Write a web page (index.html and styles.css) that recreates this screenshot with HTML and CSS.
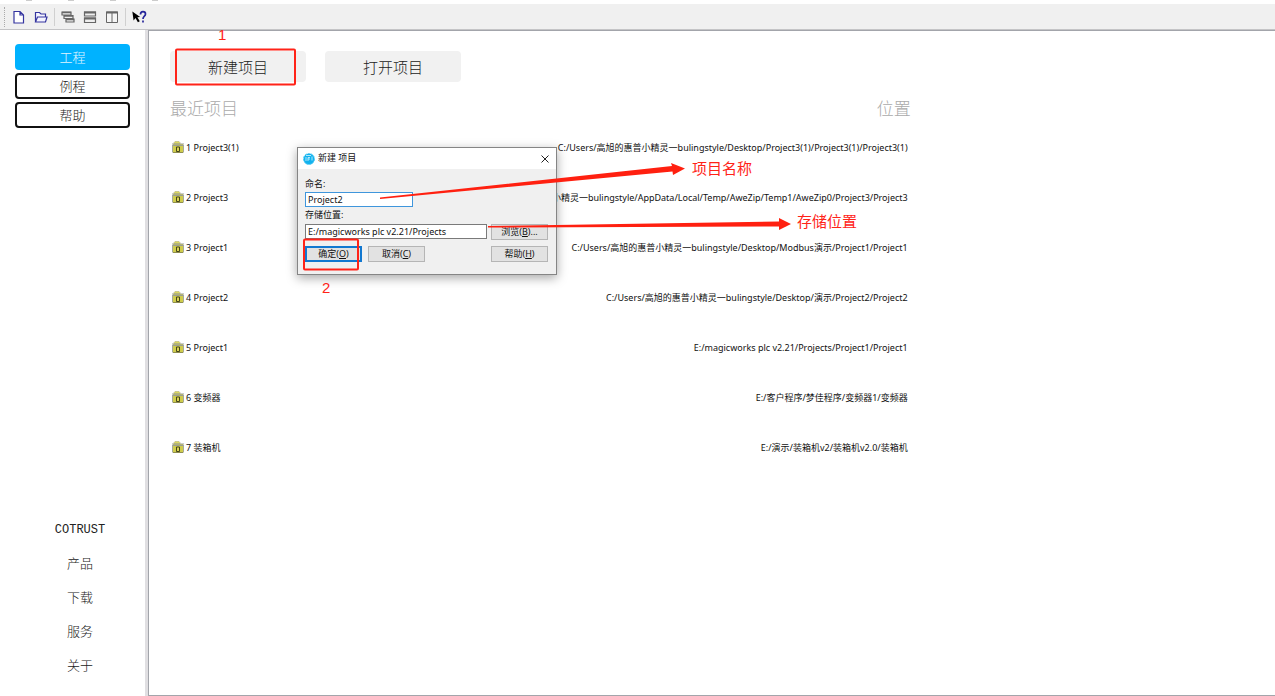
FILE: index.html
```html
<!DOCTYPE html>
<html lang="zh-CN">
<head>
<meta charset="utf-8">
<title>MagicWorks PLC</title>
<link rel="stylesheet" href="styles.css">
</head>
<body>
<svg class="symbols" aria-hidden="true">
  <symbol id="folder" viewBox="0 0 12 12">
    <path d="M1 3h10v8H1z" fill="#cfcc4c"/>
    <path d="M2 3V1.500l1-1h4l1 1V3z" fill="#dcd860" stroke="#b5b27a" stroke-width=".6"/>
    <path d="M0 3h12M0 4.500h12" stroke="#9a9d94"/>
    <path d="M.5 4v7.500M11.500 4v7.500" stroke="#a5a89c"/>
    <path d="M1 11.500h10" stroke="#8f8e50"/>
    <path d="M4.500 6h3v4.500h-3z" fill="#d9d44e" stroke="#45451c"/>
  </symbol>
</svg>
<div class="menu-edge"><i></i><i></i><i></i><i></i></div>
<header class="toolbar">
  <span class="grip"></span>
  <button class="tool" aria-label="新建"><svg viewBox="0 0 16 16"><path d="M3 2.500h6l3.500 3.500v8H3zM9 2.500V6h3.500" fill="#fff" stroke="#3434a0" stroke-width="1.200"/></svg></button>
  <button class="tool" aria-label="打开"><svg viewBox="0 0 16 16"><path d="M2.500 13V3.500h4l1.500 1.500h4.500V8M2.500 13l2-5H14l-1.500 5z" fill="#f4f4ff" stroke="#3434a0" stroke-width="1.200"/></svg></button>
  <span class="sep"></span>
  <button class="tool" aria-label="层叠"><svg viewBox="0 0 16 16"><path d="M2 3h9v3H2zM4 6.500h9v3H4zM6 10h8v3H6z" fill="#eee" stroke="#666" stroke-width="1.200"/><path d="M2 3.500h9M4 7h9M6 10.500h8" stroke="#666" stroke-width="1.400"/></svg></button>
  <button class="tool" aria-label="横向平铺"><svg viewBox="0 0 16 16"><path d="M2.500 3h11v4h-11zM2.500 9h11v4.500h-11z" fill="#eee" stroke="#666" stroke-width="1.200"/><path d="M2 3.500h12M2 9.500h12" stroke="#666" stroke-width="1.800"/></svg></button>
  <button class="tool" aria-label="纵向平铺"><svg viewBox="0 0 16 16"><path d="M2.500 3h11v10.500h-11zM8 3v10.500" fill="#f5f5f5" stroke="#666"/><path d="M2 3.500h12" stroke="#666" stroke-width="2"/></svg></button>
  <span class="sep"></span>
  <button class="tool" aria-label="帮助"><svg viewBox="0 0 16 16"><path d="M2 2v9l2.200-2 1.800 4.500 2-.8-1.800-4.200H9z" transform="rotate(-8 5 7)" fill="#000"/><path d="M9.500 5.500c0-4 5-3.500 5-.5 0 2.200-2.500 2.200-2.500 5M12 11.500V13.500" fill="none" stroke="#26269a" stroke-width="1.700"/></svg></button>
</header>
<div class="workspace">
  <aside class="sidebar">
    <nav class="tabs">
      <button class="tab active">工程</button>
      <button class="tab">例程</button>
      <button class="tab">帮助</button>
    </nav>
    <nav class="links">
      <a class="latin" href="#">COTRUST</a>
      <a href="#">产品</a>
      <a href="#">下载</a>
      <a href="#">服务</a>
      <a href="#">关于</a>
    </nav>
  </aside>
  <main class="page">
    <div class="content">
      <div class="actions">
        <button class="action">新建项目</button>
        <button class="action">打开项目</button>
      </div>
      <div class="heading"><h2>最近项目</h2><h2>位置</h2></div>
      <ul class="recent">
        <li><svg class="folder"><use href="#folder"/></svg><a href="#">1 Project3(1)</a><span class="path">C:/Users/高旭的惠普小精灵一bulingstyle/Desktop/Project3(1)/Project3(1)/Project3(1)</span></li>
        <li><svg class="folder"><use href="#folder"/></svg><a href="#">2 Project3</a><span class="path">C:/Users/高旭的惠普小精灵一bulingstyle/AppData/Local/Temp/AweZip/Temp1/AweZip0/Project3/Project3</span></li>
        <li><svg class="folder"><use href="#folder"/></svg><a href="#">3 Project1</a><span class="path">C:/Users/高旭的惠普小精灵一bulingstyle/Desktop/Modbus演示/Project1/Project1</span></li>
        <li><svg class="folder"><use href="#folder"/></svg><a href="#">4 Project2</a><span class="path">C:/Users/高旭的惠普小精灵一bulingstyle/Desktop/演示/Project2/Project2</span></li>
        <li><svg class="folder"><use href="#folder"/></svg><a href="#">5 Project1</a><span class="path">E:/magicworks plc v2.21/Projects/Project1/Project1</span></li>
        <li><svg class="folder"><use href="#folder"/></svg><a href="#">6 变频器</a><span class="path">E:/客户程序/梦佳程序/变频器1/变频器</span></li>
        <li><svg class="folder"><use href="#folder"/></svg><a href="#">7 装箱机</a><span class="path">E:/演示/装箱机v2/装箱机v2.0/装箱机</span></li>
      </ul>
    </div>
  </main>
</div>
<section class="dialog" role="dialog" aria-labelledby="dialog-title">
  <header class="titlebar">
    <svg class="logo" viewBox="0 0 12 12"><circle cx="6" cy="6" r="5.500" fill="#12b2ee" stroke="#52ccf5" stroke-dasharray="2 1"/><path d="M3 4v4M5 8V4.500h2M5 6h2M9 3.500v4M3 2.500h5" stroke="#d5f4ff" stroke-width=".8" fill="none"/></svg>
    <h1 id="dialog-title">新建 项目</h1>
    <button class="close" aria-label="关闭"><svg viewBox="0 0 8 8"><path d="M.5.5l7 7M7.500.5l-7 7" stroke="#222" fill="none"/></svg></button>
  </header>
  <form class="form">
    <label for="name">命名:</label>
    <input id="name" class="name" value="Project2">
    <label for="place">存储位置:</label>
    <div class="row">
      <input id="place" class="place" value="E:/magicworks plc v2.21/Projects">
      <button type="button" class="btn">浏览(<u>B</u>)...</button>
    </div>
    <div class="row">
      <button type="button" class="btn primary">确定(<u>O</u>)</button>
      <button type="button" class="btn">取消(<u>C</u>)</button>
      <button type="button" class="btn last">帮助(<u>H</u>)</button>
    </div>
  </form>
</section>
<div class="notes">
  <svg class="marks" width="900" height="320" viewBox="0 0 900 320">
    <rect x="176" y="49.500" width="119" height="35" rx="1" fill="none" stroke="#ff2318" stroke-width="2"/>
    <rect x="304" y="239.500" width="54" height="30" rx="1" fill="none" stroke="#ff2318" stroke-width="2"/>
    <path d="M380 197.500L672 166 671 163 685 168.500 673 175 672.500 171.500 380 199z" fill="#ff2010"/>
    <path d="M488 226L779 221.500V218L791 224 779 230V226.500L488 227.500z" fill="#ff2010"/>
  </svg>
  <span class="note one">1</span>
  <span class="note two">2</span>
  <span class="note name-note">项目名称</span>
  <span class="note place-note">存储位置</span>
</div>
</body>
</html>
```
FILE: styles.css
```css
* { box-sizing: border-box; }
body {
  margin: 0;
  height: 100vh;
  display: flex;
  flex-direction: column;
  overflow: hidden;
  background: #fff;
  color: #111;
  font-family: "Noto Sans", "Noto Sans CJK SC", sans-serif;
  font-size: 9px;
}
button, input { font: inherit; color: inherit; margin: 0; padding: 0; }
button { border: 0; background: none; }
a { color: inherit; text-decoration: none; }
h1, h2 { margin: 0; font-weight: 400; }
.symbols { position: absolute; width: 0; height: 0; }

.menu-edge { display: flex; gap: 36px; height: 4px; padding-left: 26px; }
.menu-edge i { width: 6px; height: 1px; background: #ccc; }
.toolbar {
  display: flex;
  align-items: center;
  height: 26px;
  flex: none;
  padding-left: 4px;
  background: #f0f0f0;
  border-bottom: 1px solid #c4c4c6;
}
.grip { width: 1px; height: 20px; margin-right: 5px; border-left: 1px dotted #aaa; }
.tool { width: 18px; height: 18px; margin-right: 4px; }
.tool svg { display: block; width: 16px; height: 16px; margin: 1px; }
.sep { width: 1px; height: 18px; margin-right: 4px; background: #d0d0d0; }

.workspace { flex: 1; display: flex; min-height: 0; }
.sidebar {
  width: 148px;
  flex: none;
  display: flex;
  flex-direction: column;
  justify-content: space-between;
  border-right: 3px solid #e0dfe2;
  font-family: "Liberation Sans", "Noto Sans CJK SC", sans-serif;
  font-size: 13px;
  font-weight: 300;
}
.tabs { display: flex; flex-direction: column; gap: 3px; padding: 14px 15px 0; }
.tab {
  height: 26px;
  padding-bottom: 2px;
  border: 2px solid #111;
  border-radius: 4px;
  background: #fff;
  color: #222;
}
.tab.active { border-color: #00b2ff; background: #00b2ff; color: #e2f5ff; }
.links {
  display: flex;
  flex-direction: column;
  align-items: center;
  gap: 14px;
  padding: 0 0 20px 15px;
  line-height: 20px;
  color: #222;
}
.latin { font-family: "Liberation Mono", monospace; font-size: 12px; }

.page {
  flex: 1;
  border: 1px solid #a3a5ab;
  border-right: 0;
}
.content { width: 68%; padding: 20px 4px 0 21px; }
.actions { display: flex; gap: 19px; }
.action {
  width: 136px;
  height: 31px;
  padding-bottom: 1px;
  border-radius: 4px;
  background: #f1f1f1;
  color: #222;
  font-family: "Liberation Sans", "Noto Sans CJK SC", sans-serif;
  font-size: 15px;
  font-weight: 300;
}
.heading {
  display: flex;
  justify-content: space-between;
  margin-top: 16px;
}
.heading h2 {
  color: #aaa;
  font-family: "Liberation Sans", "Noto Sans CJK SC", sans-serif;
  font-size: 17px;
  font-weight: 300;
  line-height: 24px;
}
.recent { list-style: none; margin: 0; padding: 0; }
.recent li { display: flex; align-items: center; height: 50px; padding: 0 3px 0 2px; }
.recent a { white-space: nowrap; }
.folder { flex: none; width: 12px; height: 12px; margin-right: 2px; }
.path { margin-left: auto; white-space: nowrap; }

.dialog {
  position: absolute;
  left: 297px;
  top: 147px;
  width: 260px;
  border: 1px solid #858585;
  background: #f0f0f0;
  box-shadow: 0 3px 10px rgba(0, 0, 0, .35);
}
.titlebar { display: flex; align-items: center; height: 21px; padding: 0 7px 0 5px; background: #fff; }
.logo { width: 12px; height: 12px; margin-right: 3px; }
.titlebar h1 { font-size: 9px; line-height: 12px; padding-bottom: 1px; }
.close { width: 8px; height: 8px; margin-left: auto; }
.close svg { display: block; width: 8px; height: 8px; }
.form { display: flex; flex-direction: column; padding: 8px 8px 12px 7px; }
.form label { line-height: 14px; }
.form input { height: 15px; border: 1px solid #7a7a7a; background: #fff; padding: 0 2px; }
.form .name { width: 108px; border-color: #3f96dc; margin: 1px 0; }
.form .place { width: 182px; }
.row { display: flex; justify-content: space-between; margin-top: 2px; }
.row + .row { justify-content: flex-start; gap: 6px; margin-top: 6px; }
.btn { width: 57px; height: 16px; border: 1px solid #b5b5b5; background: #e2e2e2; line-height: 12px; }
.primary { border: 2px solid #1278d0; line-height: 10px; }
.last { margin-left: auto; }

.notes {
  position: absolute;
  left: 0;
  top: 0;
  pointer-events: none;
  color: #ff2318;
  font-family: "Liberation Sans", "Noto Sans CJK SC", sans-serif;
}
.marks { display: block; }
.note { position: absolute; font-size: 15px; line-height: 20px; white-space: nowrap; }
.one { left: 218px; top: 25px; }
.two { left: 322px; top: 278px; }
.name-note { left: 692px; top: 159px; }
.place-note { left: 797px; top: 212px; }
```
